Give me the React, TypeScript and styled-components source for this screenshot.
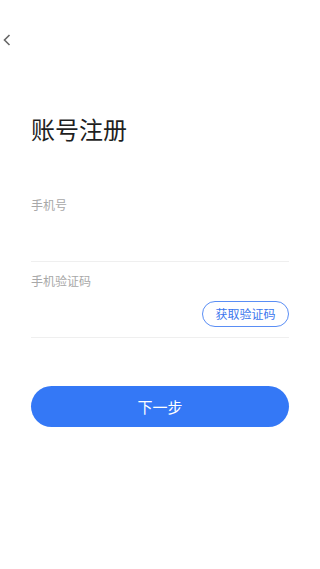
import * as React from "react";
import styled, { createGlobalStyle } from "styled-components";

const GlobalStyle = createGlobalStyle`
  body {
    margin: 0;
    background: #fff;
    font-family: "Noto Sans CJK SC", "Noto Sans", sans-serif;
  }
  * { box-sizing: border-box; }
`;

export default function App() {
  return (
    <Page>
      <GlobalStyle />
      <Header>
        <BackButton aria-label="back">
          <svg width="8" height="12" viewBox="0 0 8 12">
            <polyline points="6.5,1 1.5,6 6.5,11" fill="none" stroke="#666" strokeWidth="1.6" />
          </svg>
        </BackButton>
      </Header>
      <Content>
        <Title>账号注册</Title>
        <Form>
          <Field>
            <Label>手机号</Label>
            <InputRow>
              <Input type="tel" />
            </InputRow>
          </Field>
          <Field>
            <Label>手机验证码</Label>
            <InputRow>
              <Input type="text" />
              <CodeButton>获取验证码</CodeButton>
            </InputRow>
          </Field>
        </Form>
        <NextButton>下一步</NextButton>
      </Content>
    </Page>
  );
}

const Page = styled.div`
  width: 320px;
  min-height: 569px;
  background: #fff;
`;

const Header = styled.div`
  height: 80px;
  display: flex;
  align-items: center;
  padding-left: 1px;
`;

const BackButton = styled.button`
  border: none;
  background: none;
  padding: 0 2px;
  display: flex;
  align-items: center;
  cursor: pointer;
`;

const Content = styled.div`
  padding: 0 31px 0 31px;
`;

const Title = styled.h1`
  margin: 32px 0 0;
  font-size: 24px;
  line-height: 34px;
  font-weight: 400;
  color: #1f1f1f;
`;

const Form = styled.div`
  margin-top: 40px;
`;

const Field = styled.div`
  padding-top: 11px;
  border-bottom: 1px solid #efefef;
`;

const Label = styled.div`
  font-size: 12px;
  line-height: 16px;
  color: #a8a8a8;
`;

const InputRow = styled.div`
  height: 48px;
  display: flex;
  align-items: center;
`;

const Input = styled.input`
  flex: 1;
  min-width: 0;
  height: 100%;
  border: none;
  outline: none;
  background: transparent;
  font-size: 14px;
  font-family: inherit;
`;

const CodeButton = styled.button`
  width: 87px;
  height: 26px;
  margin-top: 1px;
  border: 1px solid #5a8ef5;
  border-radius: 13px;
  background: #fff;
  color: #3a76ee;
  font-size: 12px;
  font-family: inherit;
  padding: 0;
`;

const NextButton = styled.button`
  display: block;
  width: 100%;
  height: 41px;
  margin-top: 48px;
  border: none;
  border-radius: 21px;
  background: #3478f6;
  color: #fff;
  font-size: 15px;
  font-family: inherit;
`;
